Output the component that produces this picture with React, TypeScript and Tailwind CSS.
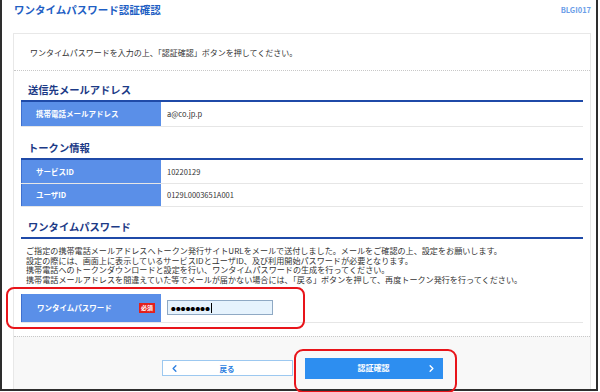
import { ChevronLeft, ChevronRight } from "lucide-react";

const rows = [
  { label: "サービスID", value: "10220129", h: "h-[24px]" },
  { label: "ユーザID", value: "0129L0003651A001", h: "h-[23px]" },
];

const notes = [
  "ご指定の携帯電話メールアドレスへトークン発行サイトURLをメールで送付しました。メールをご確認の上、設定をお願いします。",
  "設定の際には、画面上に表示しているサービスIDとユーザID、及び利用開始パスワードが必要となります。",
  "携帯電話へのトークンダウンロードと設定を行い、ワンタイムパスワードの生成を行ってください。",
  "携帯電話メールアドレスを間違えていた等でメールが届かない場合には、「戻る」ボタンを押して、再度トークン発行を行ってください。",
];

const SectionTitle = ({ title, className }: { title: string; className: string }) => (
  <div className={`${className} border-b-2 border-[#1f4aa8] pl-[7px]`}>
    <h2 className="text-[10.3px] leading-[14px] font-bold text-[#1c3a86]">{title}</h2>
  </div>
);

const App = () => {
  return (
    <div className="relative w-[600px] h-[392px] overflow-hidden bg-white text-[#333] font-['Noto_Sans_CJK_JP','Noto_Sans',sans-serif]">
      <div className="w-[598px] h-[391px] border-2 border-t-0 border-[#2e2e2e] flex flex-col">
        <div className="h-[33px] shrink-0 flex justify-between items-start pl-3 pr-[5px] pt-[3px]">
          <h1 className="text-[10.5px] leading-[14px] font-bold text-[#1f5fc4]">ワンタイムパスワード認証確認</h1>
          <span className="text-[7.5px] leading-[14px] font-bold text-[#6c9ee8]">BLGI017</span>
        </div>

        <div className="ml-[11px] mr-[5px] flex-1 flex flex-col border-l border-r border-t border-[#e8e8e8]">
          <p className="pt-[13px] pl-[16px] pb-[11px] text-[8px] leading-[12px]">
            ワンタイムパスワードを入力の上、「認証確認」ボタンを押してください。
          </p>

          <div className="border-t border-dotted border-[#c8c8c8] px-[7px]">
            <SectionTitle title="送信先メールアドレス" className="h-[31px] pt-[12px]" />
            <div className="h-[25px] flex border-b border-[#e6e6e6]">
              <div className="w-[140px] bg-[#5a8fe8] border-l border-[#3f70cf] flex items-center pl-[14px] text-[7.5px] font-bold text-white">
                携帯電話メールアドレス
              </div>
              <div className="flex items-center pl-[6px] text-[7.5px]">a@co.jp.p</div>
            </div>

            <SectionTitle title="トークン情報" className="h-[33px] pt-[14px]" />
            {rows.map((r) => (
              <div key={r.label} className={`${r.h} flex border-b border-[#e6e6e6]`}>
                <div className="w-[140px] bg-[#5a8fe8] border-l border-[#3f70cf] flex items-center pl-[14px] text-[7.5px] font-bold text-white">
                  {r.label}
                </div>
                <div className="flex items-center pl-[6px] text-[7.5px]">{r.value}</div>
              </div>
            ))}

            <SectionTitle title="ワンタイムパスワード" className="h-[32px] pt-[13px]" />
            <div className="pt-[7px] pl-[5px] text-[8.1px] leading-[9.7px]">
              {notes.map((n) => (
                <p key={n} className="whitespace-nowrap">{n}</p>
              ))}
            </div>

            <div className="mt-[9px] mb-[13px] h-[29px] flex border-b border-[#e6e6e6]">
              <div className="w-[140px] bg-[#5a8fe8] border-l border-[#3f70cf] flex items-center justify-between pl-[15px] pr-[6px] text-[7.5px] font-bold text-white">
                <span>ワンタイムパスワード</span>
                <span className="bg-[#e3201d] px-[2px] h-[10px] flex items-center text-[6px] leading-none">必須</span>
              </div>
              <div className="flex items-center pl-[6px]">
                <div className="w-[106px] h-[15px] bg-[#e6f3fd] border border-[#8fa9c4] flex items-center pl-[3px]">
                  <span className="text-[4.6px] tracking-[0.3px] leading-none text-black">●●●●●●●●</span>
                  <span className="ml-px w-px h-[10px] bg-black" />
                </div>
              </div>
            </div>
          </div>

          <div className="flex-1 border-t border-dotted border-[#c8c8c8] bg-[#f8f8f8] flex justify-center items-center gap-[12px] pt-[11px]">
            <button className="w-[131px] h-[16px] bg-white border border-[#9cc8f0] flex items-center relative text-[#2d7fe0]">
              <ChevronLeft className="absolute left-[6px]" size={11} strokeWidth={3} />
              <span className="w-full text-center text-[7.5px] font-bold">戻る</span>
            </button>
            <button className="w-[138px] h-[21px] bg-[#2d8ef0] flex items-center relative text-white">
              <span className="w-full text-center text-[8px] font-bold">認証確認</span>
              <ChevronRight className="absolute right-[6px]" size={11} strokeWidth={3} />
            </button>
          </div>
        </div>
      </div>

      <div className="absolute left-[6px] top-[287px] w-[299px] h-[42px] border-2 border-[#e8141a] rounded-[8px]" />
      <div className="absolute left-[294px] top-[349px] w-[163px] h-[44px] border-2 border-[#e8141a] rounded-[9px]" />
    </div>
  );
};

export default App;
